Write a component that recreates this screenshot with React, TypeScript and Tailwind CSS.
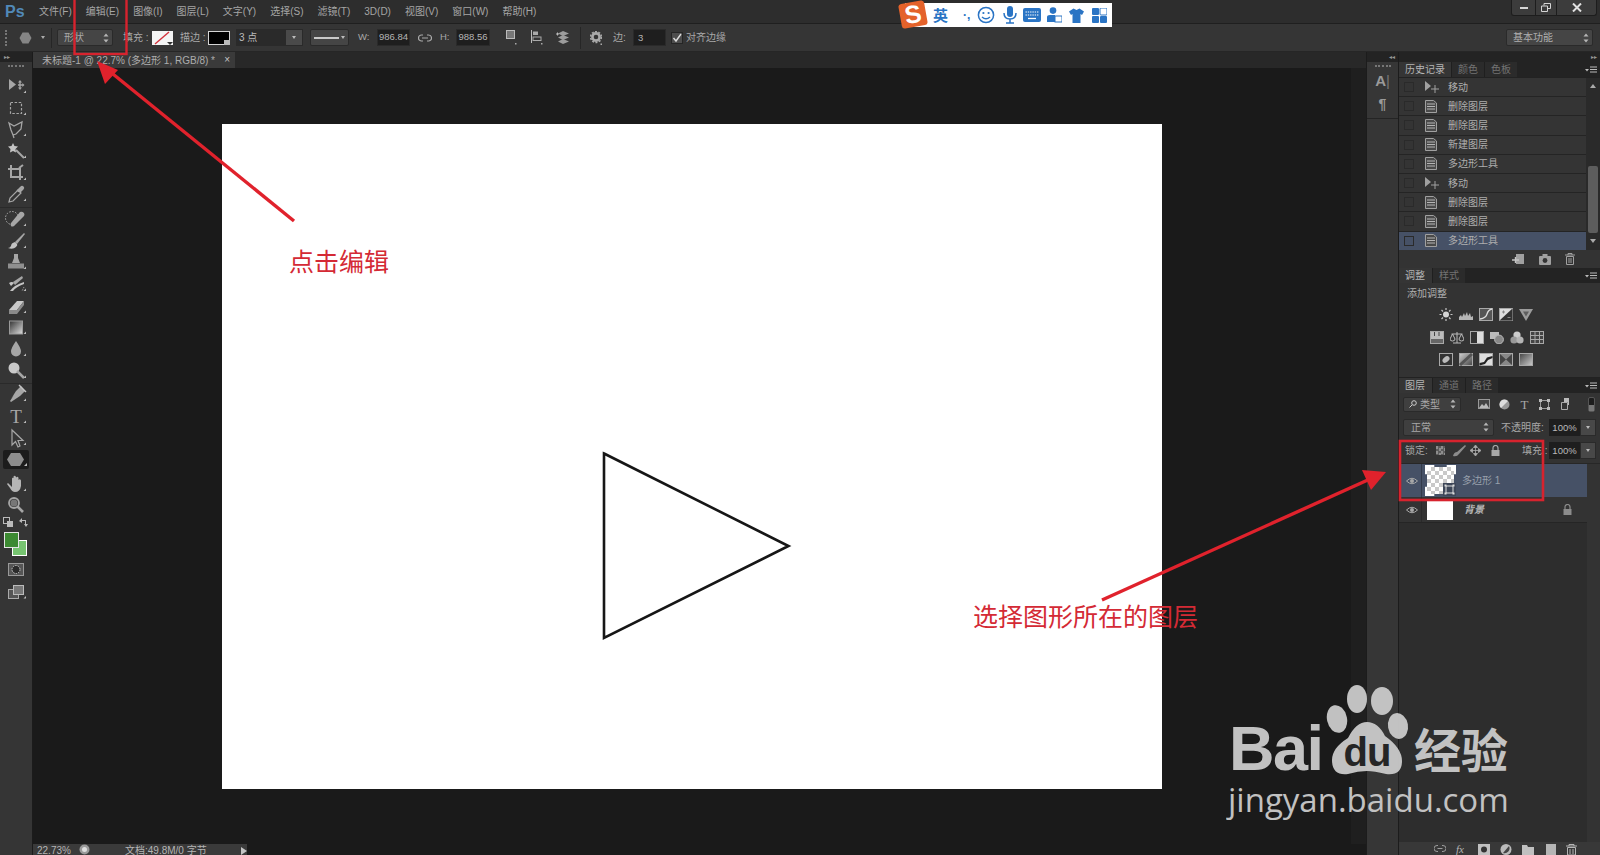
import React from "react";

const I = "#a6a6a6";

function UpDown() {
  return (
    <svg width="6" height="10" viewBox="0 0 6 10" className="shrink-0">
      <path d="M3 0.5 L5.5 3.5 H0.5Z M3 9.5 L5.5 6.5 H0.5Z" fill="#b5b5b5" />
    </svg>
  );
}

function Tool({ children, corner = true }: { children: React.ReactNode; corner?: boolean }) {
  return (
    <div className="h-[21.7px] w-full flex items-center justify-center shrink-0">
      <svg width="32" height="22" viewBox="0 0 32 22">
        {children}
        {corner && <path d="M26 15.5 V18 H23.5Z" fill="#bdbdbd" />}
      </svg>
    </div>
  );
}

const group1 = [
  <g key="m"><path d="M9 4 V15 L16 9.5Z" fill={I} /><path d="M20 5 L22 7.5 H20.7 V9.2 H22.4 V8 L24.5 10 L22.4 12 V10.8 H20.7 V12.6 H22 L20 15 L18 12.6 H19.3 V10.8 H18 V9.2 H19.3 V7.5 H18Z" fill={I} /></g>,
  <rect key="r" x="10.5" y="5.5" width="11" height="11" fill="none" stroke={I} strokeWidth="1.2" strokeDasharray="2.5 1.6" />,
  <path key="l" d="M9 5 L14 8 L22 4 L21 11 L16 16 L13 17 L11 12Z M13 17 L14 20" fill="none" stroke={I} strokeWidth="1.3" />,
  <g key="w"><path d="M13 3 L14.5 6 L18 6.5 L15.5 9 L16 12.5 L13 11 L10 12.5 L10.5 9 L8 6.5 L11.5 6Z" fill="#c4c4c4" /><path d="M16 10 L24 18" stroke={I} strokeWidth="2" /></g>,
  <path key="c" d="M8 7 H20 V18 M11 3 V15 H23 M19 6 L23 3" fill="none" stroke={I} strokeWidth="2" />,
  <g key="e"><path d="M9 19 L10 15 L18 7 L21 10 L13 18Z" fill="none" stroke={I} strokeWidth="1.2" /><path d="M18 9 L16.5 7.5 L20 4 Q22 2 23.5 3.5 Q25 5 23 7 L20.5 9.5 Z" fill={I} /></g>,
];

const group2 = [
  <g key="h"><circle cx="12" cy="10" r="6.5" fill="none" stroke={I} strokeWidth="1" strokeDasharray="1.6 1.4" /><path d="M11 15 L20 4 Q22 3 24 5 Q25 7 24 8 L14 18 Q12 19 11 18 Q10 16 11 15Z" fill={I} /></g>,
  <g key="b"><path d="M15 12 L24 3 L25 4 L17 14Z" fill={I} /><path d="M15 12 Q11 13 11 16 Q10 18 8 18 Q13 20 16 17 Q18 15 17 14Z" fill="#c2c2c2" /></g>,
  <g key="s"><path d="M14 3 H18 V7 L20 12 H12 L14 7Z" fill={I} /><rect x="8" y="12.5" width="16" height="5" fill="#8f8f8f" /></g>,
  <g key="hb"><path d="M13 9 L22 3 L23 5 L15 12Z" fill={I} /><path d="M9 10 Q12 8 14 10 L11 13Z M10 18 Q14 12 24 9 L24 11 Q16 14 13 18Z" fill="#c4c4c4" /><path d="M24 14 L22 18" stroke={I} strokeDasharray="1 1" /></g>,
  <g key="er"><path d="M9 15 L17 6 H24 L17 15Z" fill="#c9c9c9" /><path d="M9 15 H17 V19 H9Z M17 15 L24 6 V10 L17 19Z" fill="#8a8a8a" /></g>,
  <g key="gr"><defs><linearGradient id="tg" x1="0" x2="1" y1="0" y2="1"><stop offset="0" stopColor="#333" /><stop offset="1" stopColor="#ddd" /></linearGradient></defs><rect x="9.5" y="5" width="13" height="13" fill="url(#tg)" stroke="#9a9a9a" /></g>,
  <path key="bl" d="M16 3 Q21 10 21 13.5 A5 5 0 0 1 11 13.5 Q11 10 16 3Z" fill={I} />,
  <g key="d"><circle cx="14" cy="8" r="5.5" fill="#c9c9c9" /><path d="M17 11 L24 18" stroke={I} strokeWidth="2.5" /></g>,
];

const group3 = [
  <g key="p"><path d="M21 3 L25 8 L20 13 L11 19 L10 18 L14 12 L11 16 L16 8Z" fill={I} /><path d="M19 2 L26 9" stroke="#c4c4c4" strokeWidth="1.4" /></g>,
  <text key="t" x="16" y="18" textAnchor="middle" fontSize="19" fontFamily="'Liberation Serif',serif" fill={I}>T</text>,
  <path key="a" d="M12 3 V18 L15.5 14.5 L18 20 L20 19 L18 13.5 H23Z" fill="none" stroke={I} strokeWidth="1.2" />,
];

function Toolbox() {
  return (
    <div className="w-[33px] shrink-0 flex flex-col border-r border-[#1b1b1b] bg-[#353535]">
      <div className="h-[10px] bg-[#232323] flex items-center pl-[4px] text-[6px] leading-none text-[#999]">▸▸</div>
      <div className="h-[13px] flex justify-center items-start pt-[3px]">
        <div className="w-[16px] h-[2px] border-t-2 border-dotted border-[#777]" />
      </div>
      {group1.map((t, i) => <Tool key={i}>{t}</Tool>)}
      <div className="h-[3px] border-b border-[#2a2a2a]" />
      {group2.map((t, i) => <Tool key={i}>{t}</Tool>)}
      <div className="h-[2px] border-b border-[#2a2a2a]" />
      {group3.map((t, i) => <Tool key={i}>{t}</Tool>)}
      <div className="h-[21px] flex items-center justify-center shrink-0">
        <div className="w-[26px] h-[19px] rounded-[2px] bg-[#1c1c1c] flex items-center justify-center">
          <svg width="26" height="19" viewBox="0 0 26 19">
            <path d="M8 3 H17 L21 9.5 L17 16 H8 L4 9.5Z" fill="#8d8d8d" />
            <path d="M24 13 V16 H21Z" fill="#bdbdbd" />
          </svg>
        </div>
      </div>
      <div className="h-[3px]" />
      <Tool>
        <path d="M8 10 L12 14 V6 Q12 4 13.5 5 V11 V3.5 Q15 2 16 4 V11 V4.5 Q18 3 18.5 5 V11 V7 Q20 5.5 21 7.5 V13 Q20 19 15 19 Q12 19 10 15 L7 11Z" fill="#b5b5b5" />
      </Tool>
      <Tool corner={false}>
        <circle cx="14" cy="9" r="5" fill="none" stroke={I} strokeWidth="1.8" />
        <circle cx="14" cy="9" r="3.5" fill="#777" />
        <path d="M17.5 12.5 L23 18" stroke={I} strokeWidth="2.6" />
      </Tool>
      <div className="h-[12px] flex justify-between items-center px-[3px] shrink-0">
        <svg width="11" height="11" viewBox="0 0 11 11"><rect x="0.5" y="0.5" width="6" height="6" fill="#333" stroke="#bbb" /><rect x="4" y="4" width="6" height="6" fill="#bbb" /></svg>
        <svg width="11" height="11" viewBox="0 0 11 11"><path d="M1 4 L4 1 V3 H8 V7 H10 L8 10 L6 7 H7 V4 H4 V6Z" fill="#bbb" /></svg>
      </div>
      <div className="relative h-[27px] shrink-0 mt-[3px]">
        <div className="absolute left-[12px] top-[9px] w-[15px] h-[16px] bg-[#76c470] border border-white" />
        <div className="absolute left-[4px] top-[1px] w-[15px] h-[16px] bg-[#3c8a32] border border-[#e4e4e4]" />
      </div>
      <div className="h-[22px] flex items-center justify-center shrink-0">
        <svg width="16" height="13" viewBox="0 0 16 13">
          <rect x="0.5" y="0.5" width="15" height="12" fill="#555" stroke="#999" />
          <circle cx="8" cy="6.5" r="4" fill="#2b2b2b" stroke="#ccc" strokeDasharray="1.5 1" />
        </svg>
      </div>
      <div className="h-[24px] flex items-center justify-center shrink-0">
        <svg width="32" height="16" viewBox="0 0 32 16">
          <rect x="8.5" y="5.5" width="10" height="9" fill="#555" stroke="#aaa" />
          <rect x="13.5" y="1.5" width="10" height="9" fill="#777" stroke="#bbb" />
          <path d="M26 12 V14.5 H23.5Z" fill="#bdbdbd" />
        </svg>
      </div>
      <div className="flex-1" />
    </div>
  );
}

function MenuBar() {
  const items = ["文件(F)", "编辑(E)", "图像(I)", "图层(L)", "文字(Y)", "选择(S)", "滤镜(T)", "3D(D)", "视图(V)", "窗口(W)", "帮助(H)"];
  return (
    <div className="h-[24px] shrink-0 flex items-start bg-[#2d2d2d] border-b border-[#1f1f1f]">
      <div className="w-[39px] shrink-0 pl-[5px] pt-[1px] text-[16px] leading-[21px] font-bold text-[#5189b8]">Ps</div>
      <div className="flex gap-[14px] pt-[5px] text-[10px] leading-[14px] text-[#a5a5a5]">
        {items.map((m) => <span key={m}>{m}</span>)}
      </div>
      <div className="ml-auto mr-[3px] flex h-[16px] bg-[#3c3c3c] border border-t-0 border-[#1d1d1d] rounded-b-[3px]">
        <div className="w-[24px] flex items-center justify-center border-r border-[#1d1d1d]">
          <div className="w-[8px] h-[2px] bg-[#d5d5d5]" />
        </div>
        <div className="w-[21px] flex items-center justify-center border-r border-[#1d1d1d]">
          <svg width="10" height="9" viewBox="0 0 10 9"><path d="M3 2.5 V0.5 H9.5 V5.5 H7 M0.5 3 H6.5 V8.5 H0.5Z" fill="none" stroke="#d5d5d5" /></svg>
        </div>
        <div className="w-[39px] flex items-center justify-center">
          <svg width="10" height="9" viewBox="0 0 10 9"><path d="M1 0.5 L9 8.5 M9 0.5 L1 8.5" stroke="#e0e0e0" strokeWidth="2" /></svg>
        </div>
      </div>
    </div>
  );
}

function Field({ w, children }: { w: string; children: React.ReactNode }) {
  return (
    <div className={`${w} h-[17px] shrink-0 bg-[#1e1e1e] border border-[#2a2a2a] flex items-center justify-center text-[9.5px] text-[#b5b5b5]`}>
      {children}
    </div>
  );
}

function OptionsBar() {
  return (
    <div className="h-[28px] shrink-0 flex items-center pl-[5px] bg-[#353535] border-b border-[#262626] text-[10px] text-[#a8a8a8]">
      <div className="w-[2px] h-[16px] shrink-0 border-l-2 border-dotted border-[#777]" />
      <svg width="13" height="12" viewBox="0 0 13 12" className="ml-[12px] shrink-0"><path d="M3.5 0.5 H9.5 L12.5 6 L9.5 11.5 H3.5 L0.5 6Z" fill="#858585" /></svg>
      <svg width="4" height="3" viewBox="0 0 4 3" className="ml-[9px] shrink-0"><path d="M0 0 H4 L2 3Z" fill="#aaa" /></svg>
      <div className="ml-[6px] w-px h-[20px] shrink-0 bg-[#262626]" />
      <div className="ml-[5px] w-[56px] h-[17px] shrink-0 flex items-center justify-between pl-[6px] pr-[3px] rounded-[2px] bg-[#454545] border border-[#2a2a2a] text-[#a8a8a8]">
        <span>形状</span><UpDown />
      </div>
      <span className="ml-[10px] w-[29px] shrink-0">填充 :</span>
      <svg width="21" height="14" viewBox="0 0 21 14" className="shrink-0">
        <rect width="21" height="14" fill="#f4f4f4" />
        <path d="M3 13 L17 1" stroke="#d3323c" strokeWidth="1.4" />
        <path d="M15 11 H21 L18 14Z" fill="#333" />
      </svg>
      <span className="ml-[7px] w-[28px] shrink-0">描边 :</span>
      <svg width="22" height="14" viewBox="0 0 22 14" className="shrink-0">
        <rect x="0.5" y="0.5" width="21" height="13" fill="#000" stroke="#d5d5d5" />
        <path d="M16 9 H22 V14 H16Z" fill="#bbb" />
      </svg>
      <div className="ml-[6px] w-[67px] h-[17px] shrink-0 flex bg-[#2a2a2a] border border-[#2a2a2a] text-[#bbb]">
        <span className="flex-1 pl-[2px] leading-[15px]">3 点</span>
        <div className="w-[16px] bg-[#4a4a4a] flex items-center justify-center"><svg width="4" height="3" viewBox="0 0 4 3"><path d="M0 0 H4 L2 3Z" fill="#bbb" /></svg></div>
      </div>
      <div className="ml-[7px] w-[39px] h-[17px] shrink-0 flex items-center gap-[2px] px-[3px] bg-[#454545] border border-[#2a2a2a] rounded-[2px]">
        <div className="flex-1 h-[2px] bg-[#c8c8c8]" />
        <svg width="4" height="3" viewBox="0 0 4 3" className="shrink-0"><path d="M0 0 H4 L2 3Z" fill="#bbb" /></svg>
      </div>
      <span className="ml-[9px] w-[19px] shrink-0 text-[9.5px]">W:</span>
      <Field w="w-[33px]">986.84</Field>
      <svg width="14" height="8" viewBox="0 0 14 8" className="ml-[8px] shrink-0"><path d="M5 1 H3.5 A3 3 0 0 0 3.5 7 H5 M9 1 H10.5 A3 3 0 0 1 10.5 7 H9 M4 4 H10" fill="none" stroke="#aaa" strokeWidth="1.2" /></svg>
      <span className="ml-[8px] w-[16px] shrink-0 text-[9.5px]">H:</span>
      <Field w="w-[34px]">988.56</Field>
      <svg width="11" height="15" viewBox="0 0 11 15" className="ml-[16px] shrink-0"><rect x="0.5" y="0.5" width="8" height="8" fill="#777" stroke="#bbb" /><path d="M9 13 h1.5 v1.5 h-1.5z" fill="#aaa" /></svg>
      <svg width="12" height="15" viewBox="0 0 12 15" className="ml-[14px] shrink-0"><path d="M0.5 0 V13" stroke="#bbb" /><rect x="2" y="1.5" width="5" height="3.5" fill="#aaa" /><rect x="2" y="7" width="8" height="3.5" fill="none" stroke="#aaa" /><path d="M10 13 h1.5 v1.5 h-1.5z" fill="#aaa" /></svg>
      <svg width="14" height="15" viewBox="0 0 14 15" className="ml-[13px] shrink-0"><path d="M7 1 L13 3.5 L7 6 L2 3.5Z M7 5 L13 7.5 L7 10 L2 7.5Z M7 9 L13 11.5 L7 14 L2 11.5Z" fill="#9c9c9c" /><path d="M0 4 H3 M1.5 2.5 V5.5" stroke="#bbb" /></svg>
      <div className="ml-[10px] w-px h-[22px] shrink-0 bg-[#262626]" />
      <svg width="12" height="14" viewBox="0 0 12 14" className="ml-[9px] shrink-0"><circle cx="6" cy="6" r="3.6" fill="none" stroke="#aaa" strokeWidth="2.6" /><circle cx="6" cy="6" r="5.4" fill="none" stroke="#aaa" strokeWidth="1.6" strokeDasharray="2 1.4" /><path d="M10.5 12.5 h1.5 v1.5 h-1.5z" fill="#aaa" /></svg>
      <span className="ml-[11px] w-[20px] shrink-0">边:</span>
      <div className="w-[33px] h-[17px] shrink-0 bg-[#1e1e1e] border border-[#2a2a2a] pl-[4px] text-[9.5px] leading-[15px] text-[#b5b5b5]">3</div>
      <div className="ml-[5px] w-[12px] h-[12px] shrink-0 bg-[#4d4d4d] border border-[#252525] flex items-center justify-center">
        <svg width="10" height="10" viewBox="0 0 10 10"><path d="M1.5 5 L4 8 L9 1" fill="none" stroke="#dcdcdc" strokeWidth="1.4" /></svg>
      </div>
      <span className="ml-[3px] shrink-0">对齐边缘</span>
      <div className="ml-auto mr-[7px] w-[87px] h-[17px] shrink-0 flex items-center justify-between pl-[6px] pr-[3px] rounded-[2px] bg-[#454545] border border-[#2a2a2a] text-[#b0b0b0]">
        <span>基本功能</span><UpDown />
      </div>
    </div>
  );
}

function CanvasColumn() {
  return (
    <div className="flex-1 min-w-0 flex flex-col bg-[#1a1a1a]">
      <div className="h-[16px] shrink-0 flex bg-[#282828]">
        <div className="w-[202px] flex items-center bg-[#3a3a3a] pl-[9px] text-[10px] text-[#adadad] whitespace-nowrap">
          <span>未标题-1 @ 22.7% (多边形 1, RGB/8) *</span>
          <span className="ml-auto mr-[5px] text-[10px] leading-none text-[#c5c5c5]">×</span>
        </div>
      </div>
      <div className="flex-1 min-h-0 flex">
        <div className="flex-1 pl-[189px] pt-[56px]">
          <div className="w-[940px] h-[665px] bg-white">
            <svg width="940" height="665" viewBox="0 0 940 665">
              <path d="M382 329.5 L566.5 422 L382 514Z" fill="#fff" stroke="#161616" strokeWidth="2.6" />
            </svg>
          </div>
        </div>
        <div className="w-[15px] shrink-0 bg-[#1f1f1f]" />
      </div>
      <div className="h-[11px] shrink-0 overflow-hidden flex">
        <div className="w-[214px] flex bg-[#3a3a3a] text-[10px] leading-[13px] text-[#b5b5b5]">
          <span className="ml-[4px] w-[42px]">22.73%</span>
          <svg width="11" height="11" viewBox="0 0 11 11" className="shrink-0"><circle cx="5.5" cy="5.5" r="5" fill="#9a9a9a" /><circle cx="5.5" cy="5.5" r="2.5" fill="#dedede" /></svg>
          <span className="ml-[35px] w-[116px] whitespace-nowrap">文档:49.8M/0 字节</span>
          <svg width="6" height="8" viewBox="0 0 6 8" className="mt-[3px] shrink-0"><path d="M0 0 L6 4 L0 8Z" fill="#c5c5c5" /></svg>
        </div>
      </div>
    </div>
  );
}

function DockStrip() {
  return (
    <div className="w-[33px] shrink-0 flex flex-col bg-[#363636] border-x border-[#1c1c1c]">
      <div className="h-[10px] shrink-0 bg-[#232323] flex items-center justify-end pr-[3px] text-[6px] leading-none text-[#999]">◂◂</div>
      <div className="h-[57px] shrink-0 flex flex-col items-center border-b border-[#242424]">
        <div className="mt-[3px] w-[16px] h-[2px] border-t-2 border-dotted border-[#777]" />
        <div className="mt-[5px] text-[15px] leading-[17px] font-bold text-[#9a9a9a]">A<span className="font-normal text-[#777]">|</span></div>
        <div className="mt-[7px] text-[14px] leading-[16px] font-bold text-[#9a9a9a]">¶</div>
      </div>
    </div>
  );
}

function PanelTabs({ tabs, active = 0, w }: { tabs: string[]; active?: number; w: string }) {
  return (
    <div className="h-[15px] shrink-0 flex bg-[#232323] relative text-[10px] leading-[15px]">
      {tabs.map((t, i) => (
        <div key={t} className={`${i === active ? `${w} bg-[#353535] text-[#b5b5b5]` : "bg-[#2b2b2b] text-[#737373] border-l border-[#1f1f1f]"} px-[6px] whitespace-nowrap`}>
          {t}
        </div>
      ))}
      <svg width="12" height="8" viewBox="0 0 12 8" className="ml-auto mr-[3px] mt-[4px]">
        <path d="M0 3 H4 L2 5.5Z" fill="#bbb" /><path d="M5 1 H12 M5 3.5 H12 M5 6 H12" stroke="#bbb" />
      </svg>
    </div>
  );
}

function DocIcon() {
  return (
    <svg width="12" height="13" viewBox="0 0 12 13">
      <path d="M0.5 0.5 H8.5 L11.5 3 V12.5 H0.5Z" fill="#4a4a4a" stroke="#a0a0a0" />
      <path d="M2 4 H10 M2 6.5 H10 M2 9 H10" stroke="#b5b5b5" />
    </svg>
  );
}

function MoveIcon() {
  return (
    <svg width="15" height="12" viewBox="0 0 15 12">
      <path d="M0 0 V10 L6 5Z" fill="#a0a0a0" />
      <path d="M10 4 V12 M6 8 H14" stroke="#a0a0a0" />
    </svg>
  );
}

function HistoryRow({ name, move, selected }: { name: string; move?: boolean; selected?: boolean }) {
  return (
    <div className={`h-[19.2px] shrink-0 flex items-center border-b border-[#242424] ${selected ? "bg-[#465166]" : "bg-[#343434]"}`}>
      <div className="ml-[5px] w-[10px] h-[10px] shrink-0 border border-[#2a2a2a]" />
      <div className="ml-[11px] w-[23px] shrink-0 flex items-center">{move ? <MoveIcon /> : <DocIcon />}</div>
      <span className="text-[10px] text-[#aeaeae]">{name}</span>
    </div>
  );
}

function HistoryPanel() {
  const rows = ["移动", "删除图层", "删除图层", "新建图层", "多边形工具", "移动", "删除图层", "删除图层", "多边形工具"];
  return (
    <div className="h-[206px] shrink-0 flex flex-col">
      <PanelTabs tabs={["历史记录", "颜色", "色板"]} w="w-[52px]" />
      <div className="h-[173px] shrink-0 flex border-t border-[#222]">
        <div className="w-[187px] shrink-0 flex flex-col">
          {rows.map((r, i) => <HistoryRow key={i} name={r} move={r === "移动"} selected={i === 8} />)}
        </div>
        <div className="flex-1 bg-[#2a2a2a] flex flex-col items-center pt-[6px]">
          <svg width="6" height="4" viewBox="0 0 6 4"><path d="M0 4 H6 L3 0Z" fill="#aaa" /></svg>
          <div className="mt-[78px] w-[10px] h-[67px] rounded-[2px] bg-[#5d5d5d]" />
          <svg width="6" height="4" viewBox="0 0 6 4" className="mt-[6px]"><path d="M0 0 H6 L3 4Z" fill="#aaa" /></svg>
        </div>
      </div>
      <div className="flex-1 flex items-center justify-end gap-[14px] pr-[25px] bg-[#333]">
        <svg width="13" height="12" viewBox="0 0 13 12"><path d="M4 1 H12 V11 H4Z" fill="#a0a0a0" /><path d="M0 7 H7 M3.5 4 V10" stroke="#c5c5c5" strokeWidth="1.4" /></svg>
        <svg width="12" height="11" viewBox="0 0 12 11"><rect y="2" width="12" height="9" rx="1" fill="#a0a0a0" /><rect x="3.5" y="0" width="5" height="2" fill="#a0a0a0" /><circle cx="6" cy="6.5" r="2.4" fill="#333" /></svg>
        <svg width="10" height="12" viewBox="0 0 10 12"><path d="M0 2 H10 M3 2 V0.5 H7 V2 M1.5 3.5 H8.5 V11.5 H1.5Z M4 5 V10 M6 5 V10" fill="none" stroke="#a0a0a0" /></svg>
      </div>
    </div>
  );
}

function Adj({ children }: { children: React.ReactNode }) {
  return <svg width="14" height="13" viewBox="0 0 14 13" className="shrink-0">{children}</svg>;
}

function Box({ a = "#444", b = "#ccc", id }: { a?: string; b?: string; id: string }) {
  return (
    <>
      <defs><linearGradient id={id} x1="0" x2="1" y1="0" y2="1"><stop offset="0" stopColor={a} /><stop offset="1" stopColor={b} /></linearGradient></defs>
      <rect x="0.5" y="0.5" width="13" height="12" fill={`url(#${id})`} stroke="#a8a8a8" />
    </>
  );
}

function AdjustPanel() {
  return (
    <div className="h-[110px] shrink-0 flex flex-col bg-[#333] border-b border-[#222]">
      <PanelTabs tabs={["调整", "样式"]} w="w-[33px]" />
      <div className="mt-[4px] ml-[8px] text-[10px] leading-[14px] text-[#aeaeae]">添加调整</div>
      <div className="mt-[7px] ml-[40px] flex gap-[6px]">
        <Adj><circle cx="7" cy="6.5" r="3" fill="#d5d5d5" /><path d="M7 0 V2 M7 11 V13 M0.5 6.5 H2.5 M11.5 6.5 H13.5 M2.5 2 L4 3.5 M10 9.5 L11.5 11 M11.5 2 L10 3.5 M4 9.5 L2.5 11" stroke="#c5c5c5" strokeWidth="1.2" /></Adj>
        <Adj><path d="M0 12 V9 L2 7 L3 9 L5 5 L6 8 L8 4 L9 8 L11 5 L12 9 L14 8 V12Z" fill="#b5b5b5" /></Adj>
        <Adj><rect x="0.5" y="0.5" width="13" height="12" fill="#555" stroke="#a8a8a8" /><path d="M1 11 Q7 10 8 6 T13 1" fill="none" stroke="#ddd" strokeWidth="1.3" /></Adj>
        <Adj><rect x="0.5" y="0.5" width="13" height="12" fill="#ddd" stroke="#a8a8a8" /><path d="M0.5 12.5 L13.5 0.5 V12.5Z" fill="#333" /><path d="M3 4 H6 M4.5 2.5 V5.5 M8.5 9.5 H11.5" stroke="#888" /></Adj>
        <Adj><path d="M0 1 H14 L7 13Z" fill="#9c9c9c" /><path d="M4 3.5 H10 L7 8.5Z" fill="#5e5e5e" /></Adj>
      </div>
      <div className="mt-[10px] ml-[31px] flex gap-[6px]">
        <Adj><rect x="0.5" y="0.5" width="13" height="12" fill="#bbb" stroke="#a8a8a8" /><rect x="1" y="8" width="12" height="4" fill="#666" /><path d="M4.5 1 V5 M9 1 V5" stroke="#444" /></Adj>
        <Adj><path d="M7 1 V12 M3 12 H11 M1.5 3 H12.5 M0 8 L2.5 3 L5 8 A2.5 2 0 0 1 0 8Z M9 8 L11.5 3 L14 8 A2.5 2 0 0 1 9 8Z" fill="none" stroke="#bbb" /></Adj>
        <Adj><rect x="0.5" y="0.5" width="13" height="12" fill="#ddd" stroke="#a8a8a8" /><rect x="1" y="1" width="6" height="11" fill="#333" /></Adj>
        <Adj><rect x="0" y="1" width="9" height="7" fill="#bbb" /><circle cx="9" cy="8.5" r="4.4" fill="#888" stroke="#bbb" /></Adj>
        <Adj><circle cx="7" cy="4" r="3.6" fill="#ccc" /><circle cx="4" cy="9" r="3.6" fill="#999" /><circle cx="10" cy="9" r="3.6" fill="#b5b5b5" /></Adj>
        <Adj><rect x="0.5" y="0.5" width="13" height="12" fill="#444" stroke="#a8a8a8" /><path d="M0.5 4.5 H13.5 M0.5 8.5 H13.5 M5 0.5 V12.5 M9.5 0.5 V12.5" stroke="#a8a8a8" /></Adj>
      </div>
      <div className="mt-[9px] ml-[40px] flex gap-[6px]">
        <Adj><rect x="0.5" y="0.5" width="13" height="12" fill="#333" stroke="#a8a8a8" /><ellipse cx="7" cy="6.5" rx="4" ry="2.6" transform="rotate(-40 7 6.5)" fill="#bbb" /></Adj>
        <Adj><Box id="a1" a="#cfcfcf" b="#444" /><path d="M1 12 L13 1" stroke="#555" strokeWidth="3" /></Adj>
        <Adj><rect x="0.5" y="0.5" width="13" height="12" fill="#ddd" stroke="#a8a8a8" /><path d="M0.5 10 L5 9 L8 4.5 L13.5 3 V5 L9 7 L6 11 L0.5 12.5Z" fill="#222" /></Adj>
        <Adj><rect x="0.5" y="0.5" width="13" height="12" fill="#888" stroke="#a8a8a8" /><path d="M1 1 L7 6.5 L1 12Z M13 1 L7 6.5 L13 12Z" fill="#444" /></Adj>
        <Adj><Box id="a2" /></Adj>
      </div>
    </div>
  );
}

function Spin({ children }: { children: React.ReactNode }) {
  return (
    <div className="w-[47px] h-[17px] shrink-0 flex">
      <div className="w-[31px] bg-[#1e1e1e] text-center text-[9.5px] leading-[17px] text-[#bbb]">{children}</div>
      <div className="flex-1 bg-[#484848] border border-[#2a2a2a] flex items-center justify-center">
        <svg width="4" height="3" viewBox="0 0 4 3"><path d="M0 0 H4 L2 3Z" fill="#bbb" /></svg>
      </div>
    </div>
  );
}

function Eye() {
  return (
    <svg width="12" height="8" viewBox="0 0 12 8" className="shrink-0">
      <path d="M0.5 4 Q6 -1.5 11.5 4 Q6 9.5 0.5 4Z" fill="none" stroke="#a8a8a8" />
      <circle cx="6" cy="4" r="2" fill="#a8a8a8" />
    </svg>
  );
}

function LockIcon({ c = "#a8a8a8" }: { c?: string }) {
  return (
    <svg width="9" height="11" viewBox="0 0 9 11" className="shrink-0">
      <path d="M2 5 V3 A2.5 2.5 0 0 1 7 3 V5" fill="none" stroke={c} strokeWidth="1.2" />
      <rect x="0.5" y="5" width="8" height="6" fill={c} />
    </svg>
  );
}

function LayersPanel() {
  return (
    <div className="flex-1 min-h-0 flex flex-col bg-[#333]">
      <PanelTabs tabs={["图层", "通道", "路径"]} w="w-[33px]" />
      <div className="h-[24px] shrink-0 flex items-center pl-[4px] pb-[2px]">
        <div className="w-[58px] h-[15px] shrink-0 flex items-center justify-between pl-[5px] pr-[4px] rounded-[2px] bg-[#3f3f3f] border border-[#2a2a2a] text-[10px] text-[#a8a8a8]">
          <span className="flex items-center gap-[3px]">
            <svg width="8" height="8" viewBox="0 0 8 8"><circle cx="5" cy="3" r="2.3" fill="none" stroke="#ccc" /><path d="M3 5 L0.5 7.5" stroke="#ccc" /></svg>
            类型
          </span>
          <UpDown />
        </div>
        <div className="ml-[17px] flex items-center gap-[9px]">
          <svg width="12" height="10" viewBox="0 0 12 10" className="shrink-0"><rect x="0.5" y="0.5" width="11" height="9" fill="#444" stroke="#999" /><path d="M1 9 L4 5 L6 7 L8 4 L11 9Z" fill="#bbb" /></svg>
          <svg width="11" height="11" viewBox="0 0 11 11" className="shrink-0"><circle cx="5.5" cy="5.5" r="5" fill="#999" /><path d="M5.5 0.5 A5 5 0 0 0 2 9 L9 2 A5 5 0 0 0 5.5 .5Z" fill="#ddd" /></svg>
          <span className="w-[11px] text-center font-['Liberation_Serif',serif] text-[13px] leading-none text-[#a8a8a8]">T</span>
          <svg width="11" height="11" viewBox="0 0 11 11" className="shrink-0"><rect x="1.5" y="1.5" width="8" height="8" fill="none" stroke="#999" /><path d="M0 0 h3 v3 h-3z M8 0 h3 v3 h-3z M0 8 h3 v3 h-3z M8 8 h3 v3 h-3z" fill="#bbb" /></svg>
          <svg width="11" height="12" viewBox="0 0 11 12" className="ml-[1px] shrink-0"><path d="M1.5 4.5 H7.5 V11.5 H1.5Z" fill="none" stroke="#aaa" /><path d="M4 0 H9 V7 H8 V4 H4Z" fill="#bbb" /></svg>
        </div>
        <div className="ml-auto mr-[5px] w-[7px] h-[15px] rounded-[2px] bg-[#1d1d1d] border border-[#555] flex flex-col justify-end">
          <div className="h-[6px] bg-[#777]" />
        </div>
      </div>
      <div className="h-[23px] shrink-0 flex items-center pl-[4px] pb-[3px]">
        <div className="w-[91px] h-[17px] shrink-0 flex items-center justify-between pl-[7px] pr-[4px] rounded-[2px] bg-[#3f3f3f] border border-[#2a2a2a] text-[10px] text-[#a8a8a8]">
          <span>正常</span><UpDown />
        </div>
        <span className="ml-[7px] w-[48px] shrink-0 text-[10px] text-[#a8a8a8] whitespace-nowrap">不透明度:</span>
        <Spin>100%</Spin>
      </div>
      <div className="h-[24px] shrink-0 flex items-center pl-[6px] pb-[2px] text-[10px] text-[#a8a8a8] border-b border-[#272727]">
        <span className="w-[31px] shrink-0">锁定:</span>
        <div className="w-[9px] h-[9px] shrink-0 bg-[repeating-conic-gradient(#5c5c5c_0_25%,#8d8d8d_0_50%)] bg-[length:5px_5px]" />
        <svg width="15" height="13" viewBox="0 0 15 13" className="ml-[7px] shrink-0"><path d="M1 12 Q2 8 5 8 L13 1 L14 2 L7 10 Q5 13 1 12Z" fill="#8c8c8c" /></svg>
        <svg width="11" height="11" viewBox="0 0 11 11" className="ml-[3px] shrink-0"><path d="M5.5 0 L7.5 2.5 H3.5Z M5.5 11 L7.5 8.5 H3.5Z M0 5.5 L2.5 3.5 V7.5Z M11 5.5 L8.5 3.5 V7.5Z M5.5 2 V9 M2 5.5 H9" fill="#aaa" stroke="#aaa" strokeWidth="0.8" /></svg>
        <div className="ml-[10px]"><LockIcon /></div>
        <span className="ml-[22px] w-[27px] shrink-0">填充 :</span>
        <Spin>100%</Spin>
      </div>
      <div className="h-[33px] shrink-0 w-[188px] flex items-center bg-[#465166]">
        <div className="ml-[7px] w-[16px] shrink-0 self-stretch flex items-center border-r border-[#333b4a]"><Eye /></div>
        <div className="relative ml-[3px] w-[31px] h-[31px] shrink-0 p-[2px]">
          <div className="w-full h-full bg-[repeating-conic-gradient(#c9c9c9_0_25%,#ffffff_0_50%)] bg-[length:8px_8px]" />
          <div className="absolute inset-0 border-2 border-white [clip-path:polygon(0_0,30%_0,30%_8%,70%_8%,70%_0,100%_0,100%_30%,92%_30%,92%_70%,100%_70%,100%_100%,70%_100%,70%_92%,30%_92%,30%_100%,0_100%,0_70%,8%_70%,8%_30%,0_30%)]" />
          <svg width="13" height="13" viewBox="0 0 13 13" className="absolute right-0 bottom-0"><rect width="13" height="13" fill="#3d4658" /><rect x="3" y="3" width="7" height="7" fill="none" stroke="#ddd" /><path d="M1.5 1.5 h2 v2 h-2z M9.5 1.5 h2 v2 h-2z M1.5 9.5 h2 v2 h-2z M9.5 9.5 h2 v2 h-2z" fill="#ddd" /></svg>
        </div>
        <span className="ml-[6px] text-[10px] text-[#98a0ac]">多边形 1</span>
      </div>
      <div className="h-[26px] shrink-0 w-[188px] flex items-center border-b border-[#252525] bg-[#333]">
        <div className="ml-[7px] w-[16px] shrink-0 self-stretch flex items-center border-r border-[#2a2a2a]"><Eye /></div>
        <div className="ml-[5px] w-[26px] h-[20px] shrink-0 bg-white" />
        <span className="ml-[11px] text-[10px] italic font-bold text-[#b5b5b5]">背景</span>
        <div className="ml-auto mr-[15px]"><LockIcon c="#8c8c8c" /></div>
      </div>
      <div className="flex-1 min-h-0 w-full flex">
        <div className="w-[188px] shrink-0 bg-[#2d2d2d]" />
        <div className="flex-1 bg-[#333]" />
      </div>
      <div className="h-[13px] shrink-0 flex items-start justify-end gap-[10px] pr-[23px] pt-[2px] bg-[#383838] overflow-hidden">
        <svg width="12" height="7" viewBox="0 0 12 7" className="mt-[1px]"><path d="M4 0.5 H3 A3 3 0 0 0 3 6.5 H4 M8 0.5 H9 A3 3 0 0 1 9 6.5 H8 M3.5 3.5 H8.5" fill="none" stroke="#9c9c9c" /></svg>
        <span className="w-[12px] font-['Liberation_Serif',serif] italic text-[11px] leading-[11px] text-[#b5b5b5]">fx</span>
        <svg width="12" height="11" viewBox="0 0 12 11"><rect width="12" height="11" fill="#c0c0c0" /><circle cx="6" cy="5.5" r="3" fill="#333" /></svg>
        <svg width="12" height="11" viewBox="0 0 12 11"><circle cx="6" cy="5.5" r="5.5" fill="#bbb" /><path d="M3 9 L9 2 A5 5 0 0 1 3 9Z" fill="#444" /></svg>
        <svg width="12" height="11" viewBox="0 0 12 11"><path d="M0 1 H5 L6 3 H12 V11 H0Z" fill="#c0c0c0" /></svg>
        <svg width="12" height="11" viewBox="0 0 12 11"><path d="M2 0 H12 V11 H2Z" fill="#b5b5b5" /></svg>
        <svg width="11" height="11" viewBox="0 0 11 11"><path d="M0 2 H11 M3 2 V0.5 H8 V2 M1.5 3.5 H9.5 V11 H1.5Z M4 5 V10 M7 5 V10" fill="none" stroke="#b5b5b5" /></svg>
      </div>
    </div>
  );
}

function RightPanels() {
  return (
    <div className="w-[201px] shrink-0 flex flex-col bg-[#333]">
      <div className="h-[10px] shrink-0 bg-[#232323] flex items-center justify-end pr-[3px] text-[6px] leading-none text-[#999]">▸▸</div>
      <HistoryPanel />
      <AdjustPanel />
      <LayersPanel />
    </div>
  );
}

function Sogou() {
  return (
    <div className="absolute left-[899px] top-0 h-[29px] w-[213px]">
      <div className="absolute left-[6px] top-[3px] right-0 h-[24px] bg-white flex items-center text-[#2a74c4]">
        <span className="ml-[28px] w-[16px] text-[15px] font-bold leading-none">英</span>
        <span className="ml-[14px] w-[9px] text-[12px] font-bold leading-none">·,</span>
        <svg width="18" height="18" viewBox="0 0 18 18" className="ml-[5px] shrink-0"><circle cx="9" cy="9" r="7.6" fill="none" stroke="currentColor" strokeWidth="1.5" /><circle cx="6.4" cy="7" r="1.1" fill="currentColor" /><circle cx="11.6" cy="7" r="1.1" fill="currentColor" /><path d="M5 11 Q9 14.5 13 11" fill="none" stroke="currentColor" strokeWidth="1.4" /></svg>
        <svg width="14" height="18" viewBox="0 0 14 18" className="ml-[8px] shrink-0"><rect x="4" y="0" width="6" height="11" rx="3" fill="currentColor" /><path d="M1 7 Q1 13 7 13 Q13 13 13 7 M7 13 V17 M3 17 H11" fill="none" stroke="currentColor" strokeWidth="1.5" /></svg>
        <svg width="18" height="14" viewBox="0 0 18 14" className="ml-[6px] shrink-0"><rect width="18" height="14" rx="2" fill="currentColor" /><path d="M2.5 4 H15.5 M2.5 7 H15.5" stroke="#fff" strokeWidth="1.2" strokeDasharray="1.4 0.9" /><path d="M5 10.5 H13" stroke="#fff" strokeWidth="1.3" /></svg>
        <svg width="15" height="16" viewBox="0 0 15 16" className="ml-[6px] shrink-0"><circle cx="6" cy="3.6" r="3.3" fill="currentColor" /><path d="M0 15 V10 Q0 8 3 8 H8 V15Z" fill="currentColor" /><rect x="8" y="9" width="7" height="6" fill="#fff" stroke="currentColor" /></svg>
        <svg width="15" height="15" viewBox="0 0 15 15" className="ml-[7px] shrink-0"><path d="M4.5 0.5 L7.5 2 L10.5 0.5 L15 3.5 L13 7 L11.5 6 V15 H3.5 V6 L2 7 L0 3.5Z" fill="currentColor" /></svg>
        <svg width="15" height="15" viewBox="0 0 15 15" className="ml-[8px] shrink-0"><rect width="7" height="7" rx="1" fill="currentColor" /><rect x="8" y="0" width="7" height="7" rx="1" fill="none" stroke="currentColor" /><rect y="8" width="7" height="7" rx="1" fill="currentColor" /><rect x="8" y="8" width="7" height="7" rx="1" fill="currentColor" /></svg>
      </div>
      <div className="absolute left-[1px] top-[2px] w-[26px] h-[25px] -rotate-[10deg] rounded-[3px] bg-[#e4622a] flex items-center justify-center text-[25px] font-bold leading-none text-white font-['Liberation_Sans',sans-serif]">S</div>
    </div>
  );
}

function Annotations() {
  return (
    <>
      <svg width="1600" height="855" viewBox="0 0 1600 855" className="absolute inset-0 pointer-events-none">
        <rect x="74.5" y="-3" width="52" height="57" fill="none" stroke="#d7232e" strokeWidth="2.4" />
        <rect x="1400" y="441" width="143" height="59" fill="none" stroke="#d7232e" strokeWidth="2.6" />
        <path d="M294 221 L108 70" stroke="#e0222c" strokeWidth="3.4" />
        <path d="M97 61 L118 70 L105 84Z" fill="#e0222c" />
        <path d="M1102 600 L1370 479" stroke="#e0222c" strokeWidth="3.4" />
        <path d="M1386 472 L1362 470 L1371 490Z" fill="#e0222c" />
      </svg>
      <div className="absolute left-[289px] top-[246px] text-[25px] leading-[32px] text-[#d42a35] whitespace-nowrap">点击编辑</div>
      <div className="absolute left-[973px] top-[601px] text-[25px] leading-[32px] text-[#d42a35] whitespace-nowrap">选择图形所在的图层</div>
    </>
  );
}

function Watermark() {
  return (
    <div className="absolute left-[1226px] top-[684px] w-[300px] h-[145px] text-[#cacaca] opacity-95 pointer-events-none">
      <div className="absolute left-[3px] top-[31px] text-[63px] leading-[66px] font-bold tracking-[-1.5px] whitespace-nowrap">Bai</div>
      <svg width="90" height="96" viewBox="0 0 90 96" className="absolute left-[100px] top-0">
        <ellipse cx="11" cy="35" rx="10" ry="14" transform="rotate(-12 11 35)" fill="#cacaca" />
        <ellipse cx="31" cy="15" rx="10" ry="14" fill="#cacaca" />
        <ellipse cx="56" cy="17" rx="11" ry="14" fill="#cacaca" />
        <ellipse cx="72" cy="42" rx="10" ry="13" transform="rotate(-10 72 42)" fill="#cacaca" />
        <path d="M41 38 Q52 38 59 52 Q76 64 76 77 Q76 92 60 90 Q48 87 41 87 Q32 87 22 90 Q6 92 6 76 Q6 64 22 54 Q30 38 41 38Z" fill="#cacaca" />
        <text x="41" y="82" textAnchor="middle" fontSize="40" fontWeight="700" letterSpacing="-1" fontFamily="'Liberation Sans',sans-serif" fill="#262626">du</text>
      </svg>
      <div className="absolute left-[188px] top-[38px] text-[47px] leading-[60px] font-bold whitespace-nowrap">经验</div>
      <div className="absolute left-[2px] top-[93px] text-[33px] leading-[46px] font-['Open_Sans',sans-serif] whitespace-nowrap">jingyan.baidu.com</div>
    </div>
  );
}

export default function App() {
  return (
    <div className="relative w-[1600px] h-[855px] overflow-hidden flex flex-col bg-[#1a1a1a] font-['Liberation_Sans','Noto_Sans_CJK_SC',sans-serif]">
      <MenuBar />
      <OptionsBar />
      <div className="flex-1 min-h-0 flex">
        <Toolbox />
        <CanvasColumn />
        <DockStrip />
        <RightPanels />
      </div>
      <Sogou />
      <Annotations />
      <Watermark />
    </div>
  );
}
